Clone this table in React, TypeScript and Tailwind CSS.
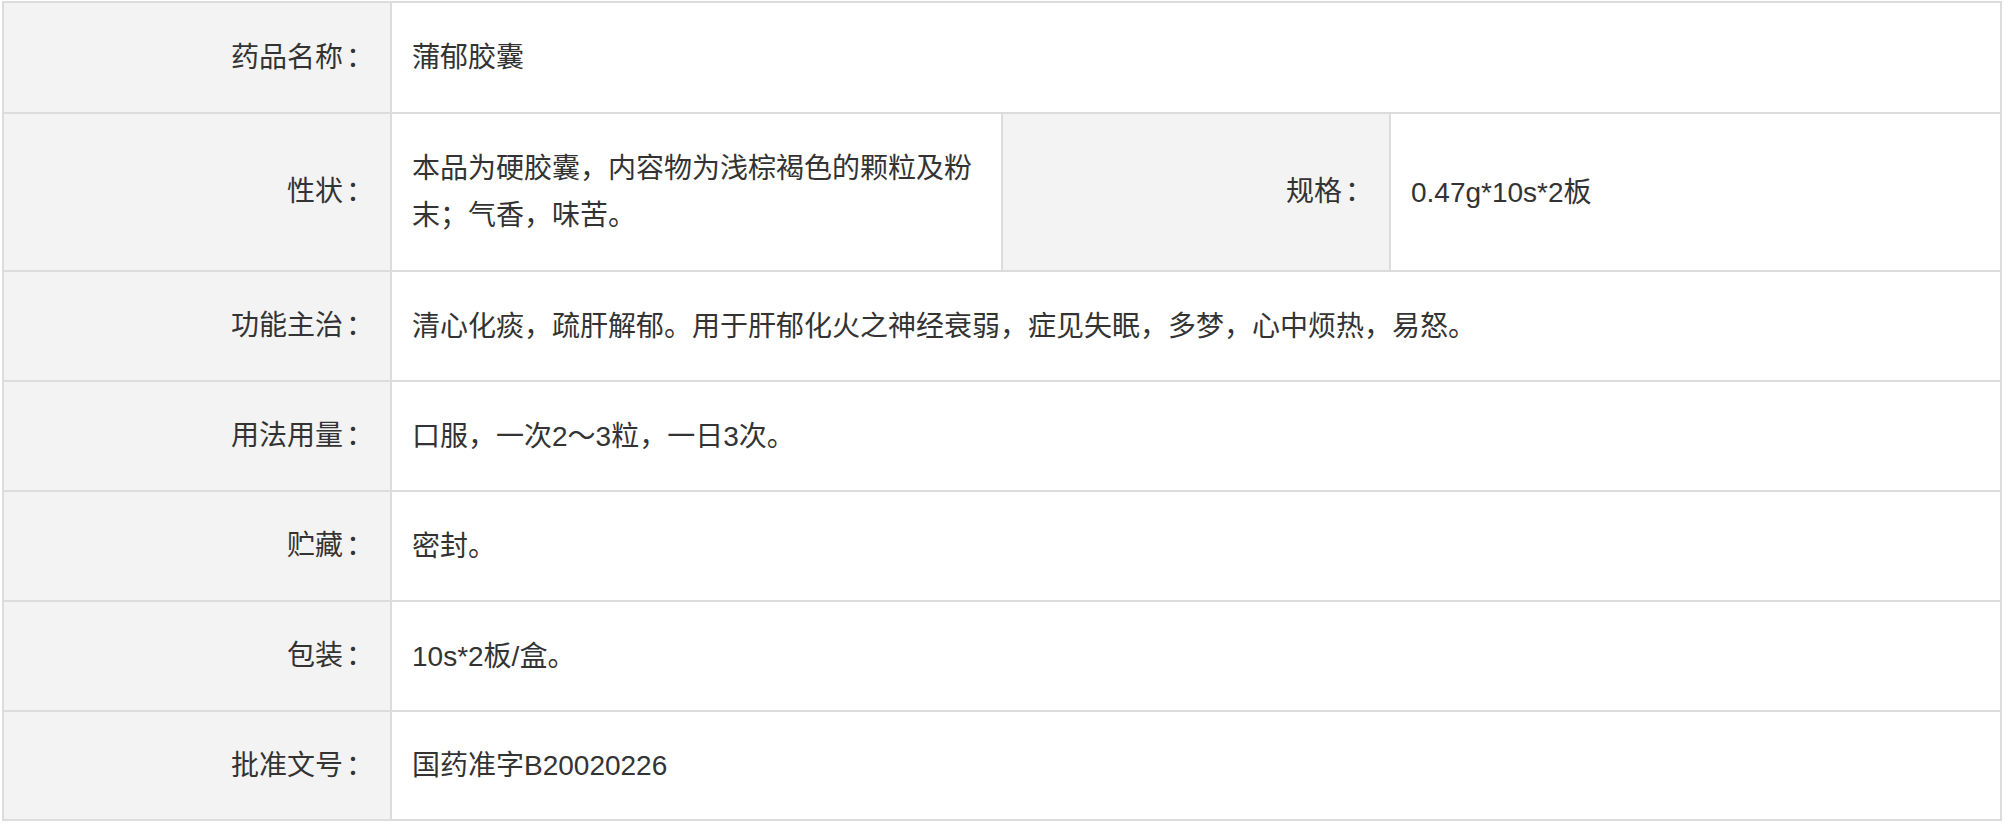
const font = { fontFamily: '"Liberation Sans", "Noto Sans CJK SC", sans-serif' };

type Row = { label: string; value: string; extra?: { label: string; value: string } };

const rows: Row[] = [
  { label: '药品名称', value: '蒲郁胶囊' },
  {
    label: '性状',
    value: '本品为硬胶囊，内容物为浅棕褐色的颗粒及粉末；气香，味苦。',
    extra: { label: '规格', value: '0.47g*10s*2板' },
  },
  { label: '功能主治', value: '清心化痰，疏肝解郁。用于肝郁化火之神经衰弱，症见失眠，多梦，心中烦热，易怒。' },
  { label: '用法用量', value: '口服，一次2～3粒，一日3次。' },
  { label: '贮藏', value: '密封。' },
  { label: '包装', value: '10s*2板/盒。' },
  { label: '批准文号', value: '国药准字B20020226' },
];

function Label({ children }: { children: string }) {
  return (
    <div className="flex items-center justify-end bg-[#f3f3f3] pr-[16px] text-right">
      {children}
      <span className="ml-[3px]">：</span>
    </div>
  );
}

function Value({ children, span }: { children: string; span?: boolean }) {
  return (
    <div className={`flex items-center bg-white pl-[20px] pr-[20px] ${span ? 'col-span-3' : ''}`}>
      <span className="leading-[47px]">{children}</span>
    </div>
  );
}

export default function App() {
  return (
    <div className="min-h-screen bg-white pl-[2px] pt-[1px]" style={font}>
      <div className="grid w-[2000px] grid-cols-[386px_609px_386px_609px] grid-rows-[109px_156px_108px_108px_108px_108px_107px] gap-[2px] border-2 border-[#dcdcdc] bg-[#dcdcdc] text-[28px] text-[#333333]">
        {rows.map((row) =>
          row.extra ? (
            <div key={row.label} className="contents">
              <Label>{row.label}</Label>
              <Value>{row.value}</Value>
              <Label>{row.extra.label}</Label>
              <Value>{row.extra.value}</Value>
            </div>
          ) : (
            <div key={row.label} className="contents">
              <Label>{row.label}</Label>
              <Value span>{row.value}</Value>
            </div>
          ),
        )}
      </div>
    </div>
  );
}
